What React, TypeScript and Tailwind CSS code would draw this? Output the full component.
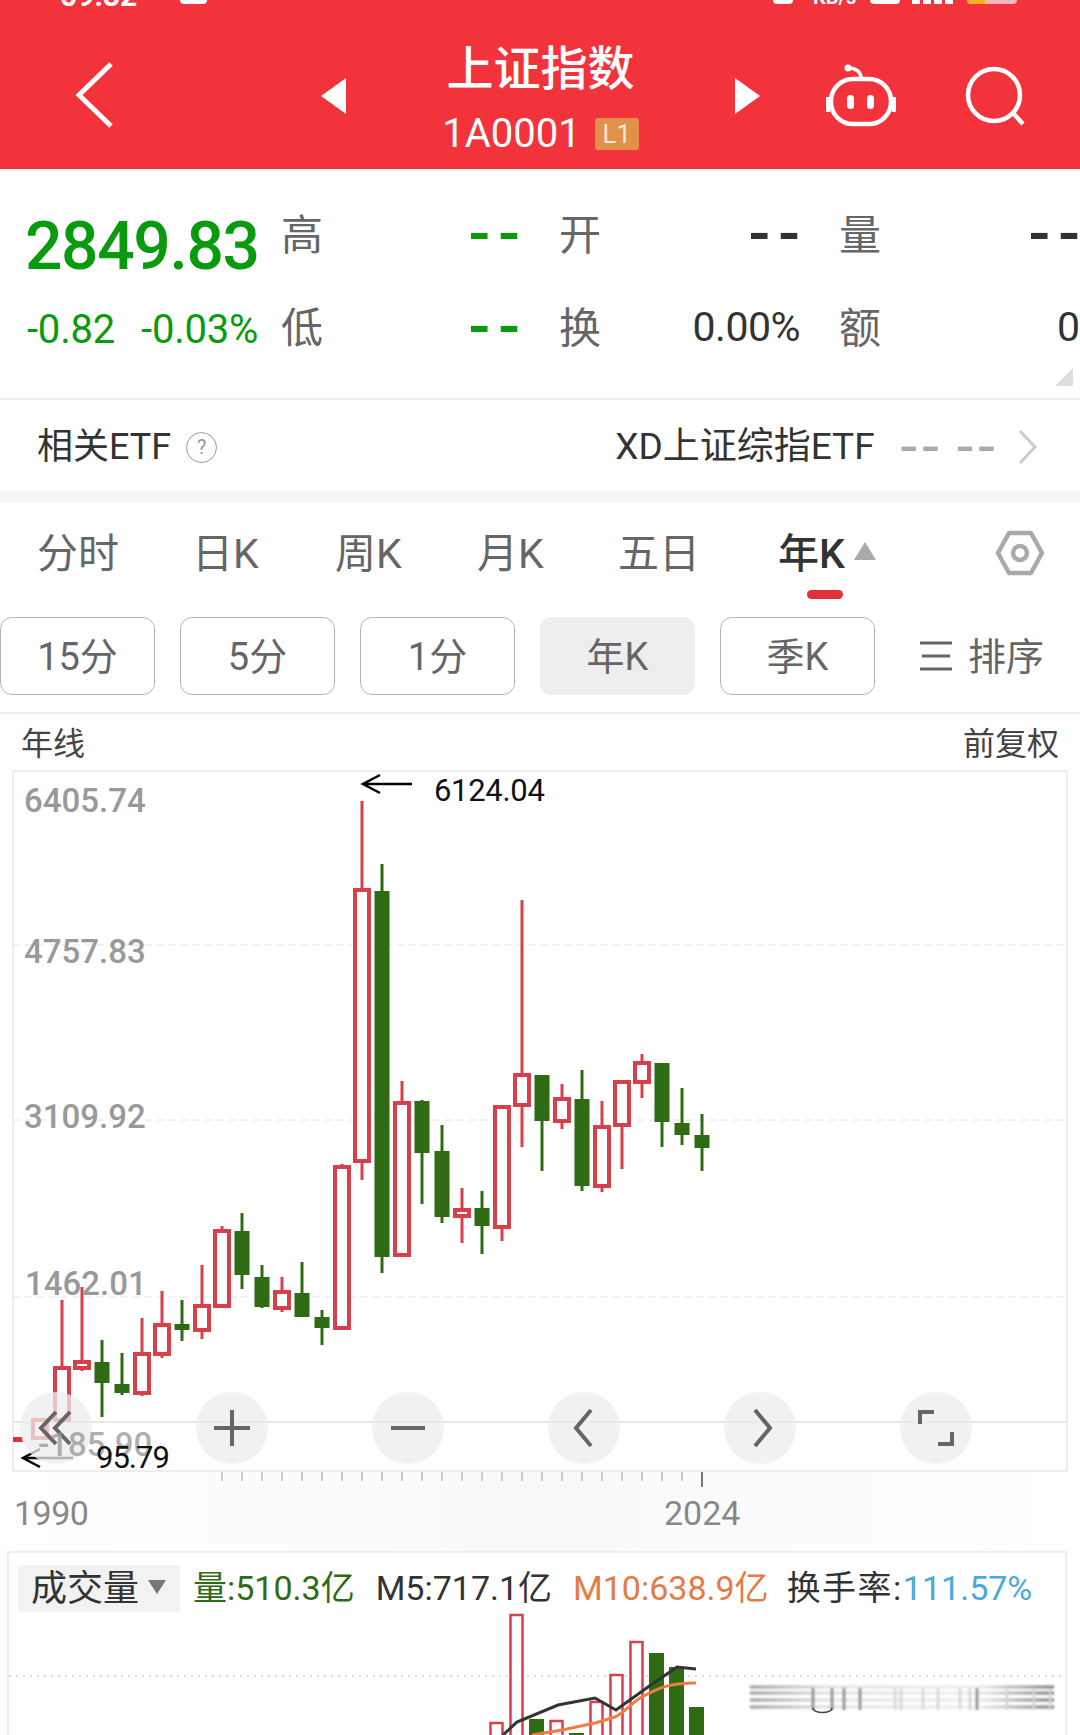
import React from "react";

const sans = "font-['Roboto','Noto_Sans_CJK_SC',sans-serif]";

// x, box top, box bottom, wick top, wick bottom, up (red outline) or down (green fill)
const candles: [number, number, number, number, number, boolean][] = [
  [40, 1420, 1438, 1420, 1438, true],
  [62, 1368, 1420, 1300, 1420, true],
  [82, 1362, 1368, 1287, 1371, true],
  [102, 1362, 1383, 1340, 1417, false],
  [122, 1384, 1393, 1353, 1395, false],
  [142, 1354, 1393, 1318, 1396, true],
  [162, 1325, 1354, 1291, 1358, true],
  [182, 1324, 1330, 1300, 1341, false],
  [202, 1306, 1330, 1265, 1339, true],
  [222, 1231, 1306, 1226, 1306, true],
  [242, 1231, 1275, 1213, 1289, false],
  [262, 1277, 1307, 1265, 1308, false],
  [282, 1292, 1308, 1277, 1312, true],
  [302, 1293, 1317, 1262, 1317, false],
  [322, 1317, 1328, 1310, 1345, false],
  [342, 1167, 1328, 1164, 1328, true],
  [362, 890, 1161, 801, 1180, true],
  [382, 891, 1257, 864, 1273, false],
  [402, 1103, 1255, 1081, 1255, true],
  [422, 1101, 1153, 1100, 1204, false],
  [442, 1151, 1217, 1125, 1223, false],
  [462, 1210, 1216, 1188, 1243, true],
  [482, 1208, 1226, 1191, 1254, false],
  [502, 1107, 1227, 1107, 1241, true],
  [522, 1075, 1105, 900, 1147, true],
  [542, 1075, 1121, 1075, 1171, false],
  [562, 1099, 1121, 1084, 1129, true],
  [582, 1099, 1186, 1070, 1191, false],
  [602, 1127, 1186, 1101, 1192, true],
  [622, 1082, 1125, 1082, 1169, true],
  [642, 1063, 1082, 1054, 1098, true],
  [662, 1063, 1122, 1063, 1147, false],
  [682, 1123, 1135, 1088, 1145, false],
  [702, 1135, 1148, 1114, 1171, false],
];

// left edge, top, up or down
const bars: [number, number, boolean][] = [
  [489, 1723, true],
  [509, 1615, true],
  [529, 1719, false],
  [549, 1721, true],
  [569, 1733, false],
  [589, 1702, true],
  [609, 1675, true],
  [629, 1642, true],
  [649, 1653, false],
  [669, 1667, false],
  [689, 1707, false],
];

const ticks = Array.from({ length: 24 }, (_, i) => 222 + i * 20);
const smudgeBars = [813, 832, 844, 860, 895, 901, 923, 938, 960, 970, 977, 1007, 1034, 1050];

function Tab({ label, active }: { label: string; active?: boolean }) {
  return (
    <div className={`w-[155px] h-[78px] pt-[3px] rounded-[12px] flex items-center justify-center text-[38px] text-[#666] ${active ? "bg-[#eeeeee]" : "border border-[#b5b5b5]"}`}>
      {label}
    </div>
  );
}

function Round({ children }: { children: React.ReactNode }) {
  return (
    <div className="w-[72px] h-[72px] rounded-full bg-[#ececec]/75 flex items-center justify-center">
      <svg width="44" height="44" viewBox="0 0 44 44" fill="none" stroke="#666" strokeWidth="4">
        {children}
      </svg>
    </div>
  );
}

function Dashes({ className }: { className: string }) {
  return <span className={`text-[64px] font-medium leading-[40px] tracking-[8px] mr-[-8px] ${className}`}>--</span>;
}

export default function App() {
  return (
    <div className={`w-[1080px] h-[1735px] overflow-hidden bg-white ${sans}`}>
      {/* Cabeçalho */}
      <div className="relative h-[169px] bg-[#f2333b] text-white">
        <div className="absolute top-[-19px] left-[60px] text-[30px] font-bold leading-[30px]">09:32</div>
        <div className="absolute top-0 left-[180px] w-[27px] h-[4px] bg-white rounded-b-[4px]" />
        <div className="absolute top-0 left-[773px] w-[20px] h-[4px] bg-white rounded-b-full" />
        <div className="absolute top-[-13px] left-[813px] text-[20px] font-bold leading-[20px]">KB/s</div>
        <div className="absolute top-0 left-[870px] w-[30px] h-[4px] bg-white rounded-b-[4px]" />
        <div className="absolute top-0 left-[912px] flex gap-[3px]">
          <div className="w-[8px] h-[4px] bg-white" />
          <div className="w-[8px] h-[4px] bg-white" />
          <div className="w-[8px] h-[4px] bg-white" />
          <div className="w-[8px] h-[4px] bg-white" />
        </div>
        <div className="absolute top-0 left-[967px] w-[50px] h-[4px] bg-[#f7b7bb] rounded-b-[4px] overflow-hidden">
          <div className="w-[18px] h-full bg-[#f5b324]" />
        </div>

        <div className="absolute inset-0 flex items-center pt-[25px]">
          <svg className="ml-[76px] mt-[-4px]" width="38" height="66" viewBox="0 0 38 66" fill="none" stroke="white" strokeWidth="5">
            <path d="M35 2 L3 33 L35 64" />
          </svg>
          <svg className="ml-[207px] mt-[-2px]" width="26" height="36" viewBox="0 0 26 36" fill="white">
            <path d="M25 0 L0 18 L25 36 Z" />
          </svg>
          <div className="w-[387px] self-start flex flex-col items-center font-medium">
            <div className="text-[47px] leading-[56px] mt-[16px]">上证指数</div>
            <div className="flex items-center mt-[17px] h-[40px]">
              <span className="text-[40px] font-normal leading-[40px]">1A0001</span>
              <span className="ml-[14px] w-[44px] h-[32px] rounded-[3px] bg-[#e2914a] flex items-center justify-center text-[26px] font-normal text-[#fbe6d2]">L1</span>
            </div>
          </div>
          <svg className="mt-[-2px]" width="26" height="36" viewBox="0 0 26 36" fill="white">
            <path d="M1 0 L26 18 L1 36 Z" />
          </svg>
          <svg className="ml-[65px] mt-[-2px]" width="72" height="64" viewBox="0 0 72 64" fill="none" stroke="white" strokeWidth="4.5">
            <circle cx="23" cy="4" r="3.5" fill="white" stroke="none" />
            <path d="M23 4 C31 4 36 8 36 14" strokeWidth="3.5" />
            <rect x="6" y="15" width="60" height="45" rx="22" />
            <path d="M3 33 V48 M69 33 V48" strokeWidth="4" />
            <rect x="22" y="31" width="7" height="14" rx="3.5" fill="white" stroke="none" />
            <rect x="42" y="31" width="7" height="14" rx="3.5" fill="white" stroke="none" />
          </svg>
          <svg className="ml-[67px] mt-[-2px]" width="62" height="60" viewBox="0 0 62 60" fill="none" stroke="white" strokeWidth="4.5">
            <circle cx="30" cy="29" r="26" />
            <path d="M49 47 L59 58" />
          </svg>
        </div>
      </div>

      {/* Cotação */}
      <div className="relative h-[231px] border-b-2 border-[#eeeeee] text-[#333]">
        <div className="grid grid-cols-[254px_239px_80px_200px_80px_200px] pl-[27px] pt-[24px] whitespace-nowrap">
          <div className="h-[84px] pt-[22px] ml-[-2px] flex items-center text-[66px] font-medium text-[#0a9a0e] tracking-[-1.4px]">2849.83</div>
          <div className="h-[84px] flex text-[42px] text-[#666] justify-between items-center">
            <span>高</span>
            <Dashes className="text-[#0a9a0e]" />
          </div>
          <div className="h-[84px] flex text-[42px] text-[#666] items-center pl-[39px]">开</div>
          <div className="h-[84px] flex items-center justify-end">
            <Dashes className="text-[#333]" />
          </div>
          <div className="h-[84px] flex text-[42px] text-[#666] items-center pl-[39px]">量</div>
          <div className="h-[84px] flex items-center justify-end">
            <Dashes className="text-[#333]" />
          </div>

          <div className="h-[102px] pt-[4px] flex items-center gap-[26px] text-[40px] text-[#0a9a0e] tracking-[-0.2px]">
            <span>-0.82</span>
            <span>-0.03%</span>
          </div>
          <div className="h-[102px] flex text-[42px] text-[#666] justify-between items-center">
            <span>低</span>
            <Dashes className="text-[#0a9a0e]" />
          </div>
          <div className="h-[102px] flex text-[42px] text-[#666] items-center pl-[39px]">换</div>
          <div className="h-[102px] flex text-[41px] items-center justify-end tracking-[-0.5px]">0.00%</div>
          <div className="h-[102px] flex text-[42px] text-[#666] items-center pl-[39px]">额</div>
          <div className="h-[102px] flex text-[41px] items-center justify-end">0</div>
        </div>
        <svg className="absolute left-[1055px] top-[199px]" width="18" height="18" viewBox="0 0 18 18" fill="#dddddd">
          <path d="M18 0 L18 18 L0 18 Z" />
        </svg>
      </div>

      {/* ETF */}
      <div className="h-[91px] flex items-center pl-[37px] pt-[3px] text-[36px] text-[#333] whitespace-nowrap">
        <span>相关ETF</span>
        <span className="ml-[15px] w-[31px] h-[31px] rounded-full border border-[#999] flex items-center justify-center text-[20px] text-[#999]">?</span>
        <span className="ml-[398px] text-[37px]">XD上证综指ETF</span>
        <span className="ml-[26px] text-[60px] leading-[36px] tracking-[5px] text-[#aaa]">--</span>
        <span className="ml-[13px] text-[60px] leading-[36px] tracking-[5px] text-[#aaa]">--</span>
        <svg className="ml-[18px]" width="20" height="34" viewBox="0 0 20 34" fill="none" stroke="#cccccc" strokeWidth="3">
          <path d="M2 1 L17 17 L2 33" />
        </svg>
      </div>
      <div className="h-[12px] bg-[#f5f5f5]" />

      {/* Abas de período */}
      <div className="relative h-[102px] flex items-center text-[41px] text-[#666] pt-[2px] whitespace-nowrap">
        <span className="ml-[37px] w-[155px]">分时</span>
        <span className="w-[143px]">日K</span>
        <span className="w-[142px]">周K</span>
        <span className="w-[141px]">月K</span>
        <span className="w-[160px]">五日</span>
        <span className="font-medium text-[#333]">年K</span>
        <svg className="ml-[9px] mt-[-8px]" width="22" height="18" viewBox="0 0 22 18" fill="#aaaaaa">
          <path d="M11 0 L22 18 L0 18 Z" />
        </svg>
        <svg className="ml-[119px] mt-[-4px]" width="50" height="46" viewBox="0 0 50 46" fill="none" stroke="#aaaaaa" strokeWidth="4.5" strokeLinejoin="round">
          <path d="M14 3 H36 L47 23 L36 43 H14 L3 23 Z" />
          <circle cx="25" cy="23" r="7" />
        </svg>
        <div className="absolute left-[807px] top-[87px] w-[36px] h-[9px] rounded-full bg-[#e0313b]" />
      </div>

      <div className="h-[109px] border-b-2 border-[#eeeeee] text-[#666]">
        <div className="flex items-start gap-[25px] pt-[12px]">
          <Tab label="15分" />
          <Tab label="5分" />
          <Tab label="1分" />
          <Tab label="年K" active />
          <Tab label="季K" />
          <div className="flex items-center h-[78px] text-[38px] ml-[19px] whitespace-nowrap">
            <svg width="34" height="30" viewBox="0 0 34 30" fill="none" stroke="#666" strokeWidth="3">
              <path d="M1 2 H33 M3 15 H31 M1 28 H33" />
            </svg>
            <span className="ml-[15px] pt-[2px]">排序</span>
          </div>
        </div>
      </div>

      {/* Cabeçalho do gráfico */}
      <div className="h-[56px] pt-[4px] flex items-center justify-between px-[21px] text-[32px] text-[#444]">
        <span>年线</span>
        <span>前复权</span>
      </div>

      {/* Gráfico de velas */}
      <div className="relative h-[702px] mx-[12px] border-2 border-[#eeeeee]">
        <svg className="absolute left-[-14px] top-[-2px]" width="1080" height="702" viewBox="0 770 1080 702" fill="none">
          <path d="M13 945 H1067 M13 1120 H1067 M13 1297 H1067" stroke="#e2e2e2" strokeWidth="1" strokeDasharray="7 5" />
          <path d="M13 1422 H1067" stroke="#e8e8e8" strokeWidth="2" />
          <rect x="13" y="1437" width="10" height="5" fill="#e0313b" />
          {candles.map(([x, top, bottom, wickTop, wickBottom, up]) =>
            up ? (
              <g key={x} stroke="#d5404a">
                <path d={`M${x} ${wickTop} V${top} M${x} ${bottom} V${wickBottom}`} strokeWidth="3" />
                <rect x={x - 7} y={top} width="14" height={bottom - top} strokeWidth="4" fill="white" />
              </g>
            ) : (
              <g key={x} stroke="#2f6b14">
                <path d={`M${x} ${wickTop} V${wickBottom}`} strokeWidth="3" />
                <rect x={x - 7.5} y={top} width="15" height={bottom - top} fill="#2f6b14" stroke="none" />
              </g>
            )
          )}
          <path d="M412 784 H364 M380 775 L363 784 L380 793" stroke="black" strokeWidth="2.5" />
          <path d="M73 1458 H24 M40 1449 L23 1458 L40 1467" stroke="black" strokeWidth="2.5" />
        </svg>

        {/* Rótulos do eixo */}
        <div className="absolute left-[10px] top-[9px] text-[33px] font-medium leading-[40px] text-[#999]">6405.74</div>
        <div className="absolute left-[10px] top-[160px] text-[33px] font-medium leading-[40px] text-[#999]">4757.83</div>
        <div className="absolute left-[10px] top-[325px] text-[33px] font-medium leading-[40px] text-[#999]">3109.92</div>
        <div className="absolute left-[11px] top-[492px] text-[33px] font-medium leading-[40px] text-[#999]">1462.01</div>

        {/* Botões sobre o gráfico */}
        <div className="absolute left-[6px] top-[620px] flex gap-[104px]">
          <Round>
            <path d="M22 6 L7 22 L22 38 M36 6 L21 22 L36 38" />
          </Round>
          <Round>
            <path d="M22 4 V40 M4 22 H40" />
          </Round>
          <Round>
            <path d="M5 22 H39" />
          </Round>
          <Round>
            <path d="M29 4 L14 22 L29 40" />
          </Round>
          <Round>
            <path d="M17 4 L32 22 L17 40" />
          </Round>
          <Round>
            <path d="M6 18 V6 H20 M38 26 V38 H24" />
          </Round>
        </div>

        {/* Textos por cima dos botões */}
        <div className="absolute left-[24px] top-[653px] text-[33px] font-medium leading-[40px] text-[#999]/80">-185.90</div>
        <div className="absolute left-[420px] top-[0px] text-[31px] leading-[38px] text-[#111] tracking-[-0.3px]">6124.04</div>
        <div className="absolute left-[82px] top-[667px] text-[31px] leading-[38px] text-[#111] tracking-[-1px]">95.79</div>
      </div>

      {/* Eixo do tempo */}
      <div className="relative h-[79px] bg-gradient-to-r from-white via-[#f9f9f9] to-white">
        <svg className="absolute left-0 top-0" width="1080" height="20" viewBox="0 1472 1080 20" fill="none">
          {ticks.map((x) => (
            <path key={x} d={`M${x} 1472 V1481`} stroke="#bbbbbb" strokeWidth="1.5" />
          ))}
          <path d="M702 1472 V1487" stroke="#777" strokeWidth="2" />
        </svg>
        <span className="absolute left-[14px] top-[21px] text-[34px] leading-[40px] text-[#888] tracking-[-0.5px]">1990</span>
        <span className="absolute left-[664px] top-[21px] text-[34px] leading-[40px] text-[#888]">2024</span>
      </div>

      {/* Volume */}
      <div className="relative h-[184px] mx-[7px] w-[1060px] border-t-2 border-x-2 border-[#eeeeee] overflow-hidden">
        <div className="flex items-center pt-[10px] pl-[9px] whitespace-nowrap text-[34px]">
          <div className="w-[162px] h-[47px] bg-[#f2f2f2] rounded-[4px] flex items-center pl-[13px] text-[#333] text-[36px]">
            成交量
            <svg className="ml-[9px] mt-[-4px]" width="18" height="14" viewBox="0 0 18 14" fill="#777">
              <path d="M0 0 H18 L9 14 Z" />
            </svg>
          </div>
          <span className="ml-[13px] text-[#2f6b14]">量:510.3亿</span>
          <span className="ml-[21px] text-[#333]">M5:717.1亿</span>
          <span className="ml-[21px] text-[#e57b45]">M10:638.9亿</span>
          <span className="ml-[18px] text-[#333] tracking-[1.5px]">换手率:</span>
          <span className="text-[#4aa8dc]">111.57%</span>
        </div>
        <svg className="absolute left-[-9px] top-[-2px]" width="1080" height="186" viewBox="0 1551 1080 186" fill="none">
          <defs>
            <linearGradient id="smudge" x1="750" x2="1054" y1="0" y2="0" gradientUnits="userSpaceOnUse">
              <stop offset="0" stopColor="#999" />
              <stop offset="0.25" stopColor="#e2e2e2" />
              <stop offset="0.75" stopColor="#eeeeee" />
              <stop offset="1" stopColor="#777" />
            </linearGradient>
          </defs>
          <path d="M9 1676 H1067" stroke="#dddddd" strokeWidth="2" strokeDasharray="2 5" />
          {bars.map(([x, top, up]) =>
            up ? (
              <rect key={x} x={x + 1.5} y={top} width="12" height={1740 - top} stroke="#d5404a" strokeWidth="2.5" fill="white" />
            ) : (
              <rect key={x} x={x} y={top} width="15" height={1740 - top} fill="#2f6b14" />
            )
          )}
          <path d="M503 1735 L517 1722 L558 1705 L595 1698 L616 1710 L648 1687 L677 1667 L696 1669" stroke="#333" strokeWidth="3" />
          <path d="M532 1735 L562 1730 L595 1723 L615 1717 C625 1712 632 1703 640 1698 C655 1690 665 1683 696 1683" stroke="#f07d45" strokeWidth="3" />
          {/* mancha borrada à direita */}
          <g className="blur-[1px]">
            <path d="M750 1687 H1054 M750 1693 H1054 M750 1700 H1054 M750 1707 H1054" stroke="url(#smudge)" strokeWidth="3" />
            {smudgeBars.map((x, i) => (
              <path key={x} d={`M${x} 1688 V1710`} stroke={i < 4 || i === 10 ? "#888" : "#d5d5d5"} strokeWidth="2.5" />
            ))}
          </g>
          <path d="M813 1708 C813 1714 832 1714 832 1708" stroke="#444" strokeWidth="1.5" />
        </svg>
      </div>
    </div>
  );
}
